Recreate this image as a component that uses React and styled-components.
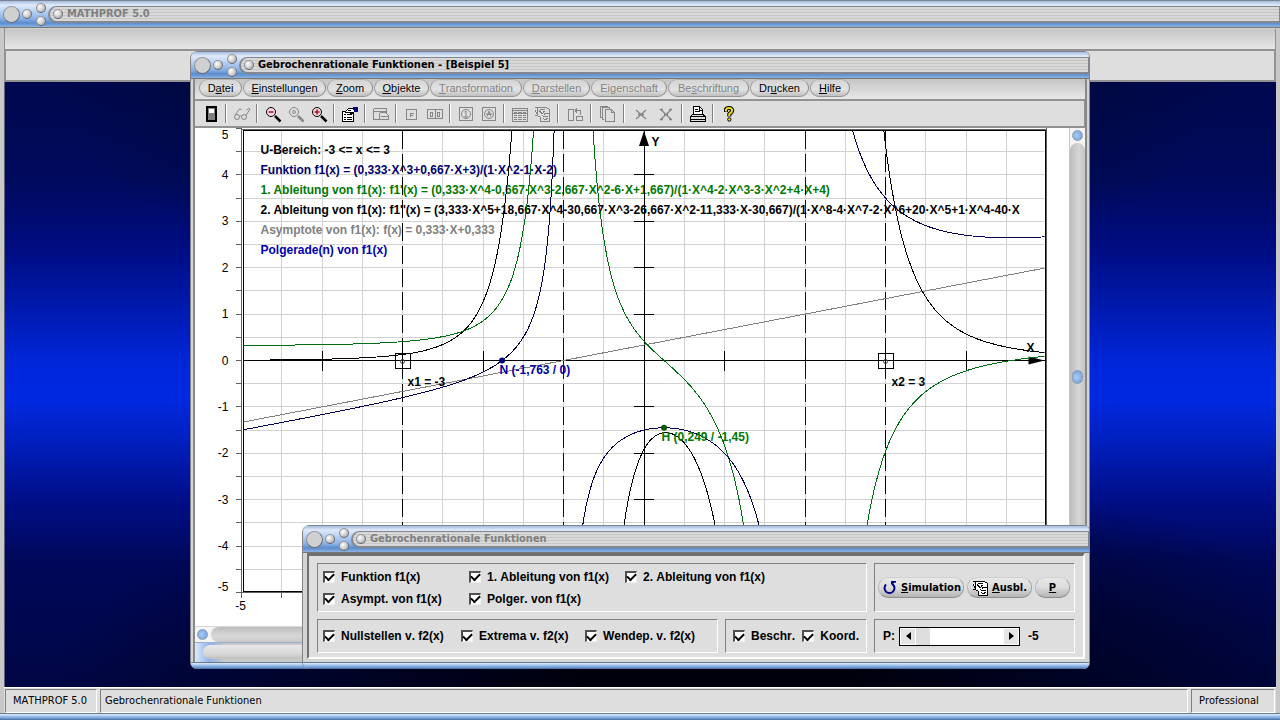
import React, { useState } from "react";
import styled, { createGlobalStyle, css } from "styled-components";

const GlobalStyle = createGlobalStyle`
  * {
    box-sizing: border-box;
  }

  body {
    margin: 0;
    background: #00000c;
    color: #000;
    font-family: "Liberation Sans", Arial, sans-serif;
    font-size: 11px;
    font-kerning: none;
  }

  button,
  input {
    font: inherit;
    color: inherit;
    margin: 0;
    padding: 0;
  }
`;

/* ---------- desktop frame ---------- */

const Desktop = styled.div`
  position: relative;
  display: flex;
  flex-direction: column;
  height: 100vh;
  min-height: 480px;
  overflow: hidden;
  background: #d0d0d0;
`;

const DesktopBody = styled.div`
  flex: 1;
  display: flex;
  flex-direction: column;
  min-height: 0;
  border: solid #c8c8c8;
  border-width: 0 4px;
  box-shadow: inset 1px 0 #808080;
`;

const EmptyMenu = styled.div`
  height: 21px;
  margin-top: 1px;
  border: 1px solid #909090;
  border-width: 0 1px 1px;
  background: linear-gradient(#c6c6c6, #e6e6e6);
`;

const EmptyToolbar = styled.div`
  height: 32px;
  border: 2px solid #929292;
  border-width: 1px 2px 2px;
  background: #dedede;
`;

const Wallpaper = styled.main`
  flex: 1;
  border-left: 1px solid #606078;
  background:
    radial-gradient(ellipse 52% 38% at 56% 100%, #00000c 20%, transparent),
    radial-gradient(ellipse 46% 38% at 50% 0, #000a24 20%, transparent),
    linear-gradient(
      #00084e 0,
      #000a5c 16%,
      #000c80 27%,
      #0018a8 36%,
      #0026d8 46%,
      #0029e2 52%,
      #0020c0 59%,
      #000e88 69%,
      #00085a 79%,
      #000644 100%
    );
`;

const StatusBar = styled.footer`
  display: flex;
  gap: 3px;
  height: 26px;
  padding: 1px 1px 0;
  border-top: 1px solid #fff;
  background: #dedede;
  font-family: "DejaVu Sans Condensed", "Liberation Sans", sans-serif;
`;

const StatusCell = styled.div`
  flex: ${(p) => (p.$grow ? "1" : "0 0 auto")};
  width: ${(p) => (p.$w ? `${p.$w}px` : "auto")};
  padding: 0 ${(p) => (p.$grow ? "4px" : "7px")};
  border: 1px solid;
  border-color: #808080 #fff #fff #808080;
  line-height: 22px;
  white-space: nowrap;
`;

const BottomEdge = styled.div`
  flex: none;
  height: 7px;
  border-top: 1px solid #70788a;
  border-bottom: 1px solid #5478a8;
  background: linear-gradient(#e0ecfc, #a8c8f0 40%, #5c8cc8);
`;

/* ---------- title bar ---------- */

const Bar = styled.header`
  flex: none;
  display: flex;
  align-items: center;
  height: 28px;
  border-top: 1px solid #7c8494;
  border-bottom: 1px solid #777;
  background: linear-gradient(
    #a4bcdc 0,
    #e0eafa 4px,
    #c0d6f4 9px,
    #88b0e6 18px,
    #5a8ccc 22px,
    #8cb2e2 26px
  );
`;

const Knob = styled.button`
  flex: none;
  width: ${(p) => (p.$big ? 17 : 10)}px;
  height: ${(p) => (p.$big ? 17 : 10)}px;
  border: 1px solid;
  border-color: #9c9ca0 #6c7078 #606468 #8c9094;
  border-radius: 50%;
  background: ${(p) =>
    p.$big
      ? "#d0d0d0"
      : "radial-gradient(circle at 35% 35%, #fff, #d4d4d4 45%, #989898)"};
`;

const Knobs = styled.div`
  display: flex;
  align-items: center;
  gap: 2px;
  padding-left: 3px;
`;

const KnobPair = styled.div`
  display: flex;
  flex-direction: column;
  gap: 3px;
  margin: 0 2px;
`;

const Groove = styled.div`
  flex: 1;
  display: flex;
  align-items: center;
  gap: 4px;
  height: 17px;
  padding-left: 3px;
  border: solid #84888e;
  border-width: 1px 1px 2px 2px;
  border-radius: 9px 0 0 9px;
  background: repeating-linear-gradient(#d8d8d8 0 2px, #c6c6c6 2px 3px);
`;

const TitleText = styled.h1`
  margin: 0;
  color: ${(p) => (p.$active ? "#000" : "#808080")};
  font: bold 11px/13px "DejaVu Sans Condensed", "Liberation Sans", sans-serif;
  white-space: nowrap;
`;

const TitleBar = ({ title, active }) => (
  <Bar>
    <Knobs>
      <Knob $big aria-label="Schließen" />
      <Knob aria-label="Minimieren" />
      <KnobPair>
        <Knob aria-label="Maximieren" />
        <Knob aria-label="Wiederherstellen" />
      </KnobPair>
    </Knobs>
    <Groove>
      <Knob aria-label="Systemmenü" />
      <TitleText $active={active}>{title}</TitleText>
    </Groove>
  </Bar>
);

/* ---------- windows ---------- */

const Window = styled.section`
  position: absolute;
  right: 190px;
  bottom: 51px;
  display: flex;
  flex-direction: column;
  overflow: hidden;
  border: solid #808488;
  border-width: 0 1px;
  border-radius: 8px 6px 7px 7px;
  background: #d4d4d4;
`;

const FunctionWindow = styled(Window)`
  top: 51px;
  left: 190px;
`;

const OptionsWindow = styled(Window)`
  left: 302px;
`;

const WindowBody = styled.div`
  flex: 1;
  display: flex;
  flex-direction: column;
  min-height: 0;
  margin: 0 2px;
  border: solid #888;
  border-width: 0 2px;
`;

const MenuBar = styled.nav`
  display: flex;
  gap: 1px;
  height: 20px;
  padding: 0 4px;
  background: linear-gradient(#c4c4c4, #e8e8e8);
`;

const MenuItem = styled.button`
  width: ${(p) => p.$w}px;
  height: 18px;
  border: 1px solid;
  border-color: #b0b0b0 #8c8c8c #949494 #9c9c9c;
  border-radius: 9px;
  background: linear-gradient(#d4d4d4, #e2e2e2 60%, #c0c0c0);
  line-height: 14px;
  white-space: nowrap;

  &:disabled {
    color: #848484;
  }
`;

const Toolbar = styled.div`
  display: flex;
  align-items: center;
  height: 29px;
  padding-left: 4px;
  border: 2px solid #929292;
  border-width: 2px 1px 2px 0;
  background: #dedede;
`;

const ToolButton = styled.button`
  display: grid;
  place-items: center;
  width: ${(p) => (p.$wide ? 25 : 23)}px;
  height: 22px;
  border: 0;
  background: none;
`;

const ToolSeparator = styled.span`
  width: 2px;
  height: 19px;
  margin: 0 3px;
  border-left: 1px solid #808080;
  border-right: 1px solid #fff;
`;

const PlotRow = styled.div`
  flex: 1;
  display: flex;
  min-height: 0;
  background: #fff;
`;

const PlotSvg = styled.svg`
  flex: 1;
  min-width: 0;
  height: 100%;
`;

const ScrollBar = styled.div`
  flex: none;
  display: flex;
  align-items: center;
  background: #f4f4f4;
  ${(p) =>
    p.$vertical
      ? css`
          flex-direction: column;
          width: 16px;
          padding: 2px 0;
          border-left: 1px solid #c8c8c8;
        `
      : css`
          height: 16px;
          padding: 0 2px;
          border-top: 1px solid #d8d8d8;
        `}
`;

const ScrollKnob = styled.button`
  width: 11px;
  height: ${(p) => (p.$tall ? 14 : 11)}px;
  border: 1px solid #8c9cb4;
  border-radius: 6px;
  background: radial-gradient(circle at 40% 50%, #a8ccf4, #6c9cd8);
`;

const ScrollTrack = styled.div`
  flex: 1;
  display: flex;
  align-items: center;
  justify-content: center;
  ${(p) =>
    p.$vertical
      ? css`
          width: 15px;
          margin: 2px 0;
          border-radius: 8px;
          background: linear-gradient(90deg, #bcbcbc, #d6d6d6 60%, #c4c4c4);
        `
      : css`
          height: 15px;
          margin: 0 3px;
          border-radius: 8px;
          background: linear-gradient(#bcbcbc, #d8d8d8 60%, #c8c8c8);
        `}
`;

const Strip = styled.div`
  height: 20px;
  padding: 2px 0 3px 8px;
  border-top: 1px solid #9ab0cc;
  background: linear-gradient(90deg, #dceafa, #8cb4e8 14px, #c8c8c8 30px);
`;

const StripGroove = styled.div`
  height: 14px;
  border-radius: 8px 0 0 8px;
  background: linear-gradient(#e8e8e8, #d8d8d8 60%, #c0c0c0);
`;

/* ---------- toolbar icons ---------- */

const Icon = styled.svg.attrs({
  width: 18,
  height: 18,
  viewBox: "0 0 18 18",
  fill: "none",
  "aria-hidden": true,
})`
  display: block;
  stroke: ${(p) => (p.$off ? "#868686" : "#000")};
  shape-rendering: ${(p) => (p.$smooth ? "auto" : "crispEdges")};
`;

const PanelIcon = () => (
  <Icon>
    <path d="M4 1h11v16H4z" fill="#000" stroke="none" />
    <path d="M6 3h7v12H6z" fill="#808080" stroke="none" />
    <path d="M7 4h5v4H7z" fill="#fff" stroke="none" />
  </Icon>
);

const GlassesIcon = () => (
  <Icon $off $smooth>
    <circle cx="4" cy="12" r="2.5" />
    <circle cx="11" cy="12" r="2.5" />
    <path d="M6.5 11.5q1-1.500 2 0M2 10l4.500-6 2 .5M13 10.500l4-6.500-1.500-.5-2 1.500" />
  </Icon>
);

const LensIcon = ({ sign, off }) => (
  <Icon $off={off} $smooth>
    <circle cx="7" cy="7" r="4.500" fill={off ? "none" : "#f4dede"} />
    <path d="M11 11l5.500 5.500" strokeWidth="2.500" />
    {sign === "dot" ? (
      <circle cx="7" cy="7" r="1.500" />
    ) : (
      <path
        d={sign === "plus" ? "M4.500 7h5M7 4.500v5" : "M4.500 7h5"}
        stroke="#c00030"
        strokeWidth="1.500"
      />
    )}
  </Icon>
);

const PropertiesIcon = () => (
  <Icon>
    <rect x="1.500" y="6.500" width="11" height="10" fill="#fff" />
    <path d="M3 9.500h2M6 9.500h5M3 12.500h2M6 12.500h5M3 14.500h2M6 14.500h5" />
    <path d="M4 7l4-4h3l2 1v3l-3 2-1-2-3 1z" fill="#fff" />
    <path d="M7 5h3M8 7h4" />
    <path d="M12 2h5v5h-4z" fill="#00007c" stroke="none" />
  </Icon>
);

const WindowIcon = () => (
  <Icon $off>
    <path d="M1.500 3.500h13v4M1.500 3.500v11h6M1.500 6.500h13M7.500 7.500v7M7.500 14.500h9v-4l-3-3h-6M9 11.500h7" />
  </Icon>
);

const SquareIcon = () => (
  <Icon $off>
    <rect x="3.500" y="4.500" width="10" height="10" />
    <path d="M7 8.500h4M7 10.500h3M7.500 8v4" />
  </Icon>
);

const PairIcon = () => (
  <Icon $off>
    <path d="M1.500 4.500h15v9h-15zM9.500 4v10M4.500 7h2v4h-2zM11.500 7h2v4h-2z" />
  </Icon>
);

const DialIcon = ({ kind }) => (
  <Icon $off $smooth>
    <rect x="2.500" y="2.500" width="13" height="13" />
    <circle cx="9" cy="9" r="4.500" />
    <path
      d={kind === "bar" ? "M7.500 7L9 6v6M7 12h4" : "M7 11.500L9 6l2 5.500M7 9.500h4M6 9h6"}
    />
  </Icon>
);

const TableIcon = () => (
  <Icon $off>
    <path d="M1.500 3.500h15v13h-15zM1 5h16M1 8.500h16" />
    <path
      d="M3 7.500h3M7 7.500h4M12 7.500h3M3 10.500h3M7 10.500h4M12 10.500h3M3 12.500h3M7 12.500h4M12 12.500h3M3 14.500h3M7 14.500h4M12 14.500h3"
    />
  </Icon>
);

const SheetIcon = ({ off }) => (
  <Icon $off={off}>
    <path d="M4.500 2.500h8l3 2v12h-9v-4l-3-2-2-5" fill={off ? "none" : "#fff"} />
    <path d="M1 2.500h4M3 2.500v7M1 10.500h3M5 5l3 4 3-3M6 4.500h5M10 8h5M8 10l2 2 4-1M9 13l2 2 3-2M9 6.500l2 3" />
  </Icon>
);

const FlipIcon = () => (
  <Icon $off>
    <path d="M2.500 4.500h5v11h-5zM10.500 11.500h6v4h-6zM9 5.500h5.500v4M9 5.500l2-2M9 5.500l2 2" />
  </Icon>
);

const StackIcon = () => (
  <Icon $off>
    <path d="M2.500 12.500h-1v-11h7v1M4.500 14.500h-1v-12h7v1M6.500 4.500h6l3 3v9h-9zM12.500 4.500v3h3" />
  </Icon>
);

const CrossIcon = ({ big }) => (
  <Icon $off $smooth>
    <path
      d={
        big
          ? "M3 4l12 11M15 4L3 15M3 4.500h3M12 4.500h3M7 9.500h4M3 14.500h3M12 14.500h3"
          : "M4 5l10 9M14 5L4 14M6 9.500h6"
      }
      strokeWidth="1.300"
    />
  </Icon>
);

const PrinterIcon = () => (
  <Icon>
    <path d="M4.500 9.500v-8h6l3 3v5" fill="#fff" />
    <path d="M10.500 2v3h3M6 4.500h3M6 6.500h5" />
    <path d="M1.500 11.500l2-2h11l2 2v5h-15z" fill="#dedede" />
    <path d="M1 11.500h16M1 14.500h16M1 16.500h16M14.500 10v1" />
  </Icon>
);

const HelpIcon = () => (
  <Icon $smooth>
    <path d="M6 7V4.500Q6.500 3 9 3t3.200 2Q12.300 7 9.300 9v2.500" strokeWidth="4" />
    <path d="M6 6.500V4.500Q6.500 3 9 3t3.200 2Q12.300 7 9.300 9v2" stroke="#f0e020" strokeWidth="2" />
    <circle cx="9.300" cy="14.500" r="1.700" fill="#f0e020" />
  </Icon>
);

const RotateIcon = () => (
  <Icon $smooth>
    <path d="M5 5.500a5 5 0 1 0 7 0" stroke="#000084" strokeWidth="2" />
    <path d="M10 2h5v1.500l-2.500.5V8L10 5z" fill="#000084" stroke="none" />
  </Icon>
);

const tools = [
  { icon: <PanelIcon />, label: "Ansicht" },
  "|",
  { icon: <GlassesIcon />, label: "Betrachten" },
  "|",
  { icon: <LensIcon sign="minus" />, label: "Verkleinern" },
  { icon: <LensIcon sign="dot" off />, label: "Originalgröße" },
  { icon: <LensIcon sign="plus" />, label: "Vergrößern" },
  "|",
  { icon: <PropertiesIcon />, label: "Einstellungen" },
  "|",
  { icon: <WindowIcon />, label: "Fenster" },
  "|",
  { icon: <SquareIcon />, label: "Punkt" },
  { icon: <PairIcon />, label: "Punktpaar" },
  "|",
  { icon: <DialIcon kind="bar" />, label: "Markierung" },
  { icon: <DialIcon kind="letter" />, label: "Beschriftung" },
  "|",
  { icon: <TableIcon />, label: "Tabelle" },
  { icon: <SheetIcon off />, label: "Ausblenden" },
  "|",
  { icon: <FlipIcon />, label: "Drehen", wide: true },
  "|",
  { icon: <StackIcon />, label: "Kopieren", wide: true },
  "|",
  { icon: <CrossIcon />, label: "Löschen", wide: true },
  { icon: <CrossIcon big />, label: "Alles löschen", wide: true },
  "|",
  { icon: <PrinterIcon />, label: "Drucken" },
  "|",
  { icon: <HelpIcon />, label: "Hilfe" },
];

/* text is split around the underlined access key */
const menus = [
  { text: ["D", "a", "tei"], w: 43 },
  { text: ["", "E", "instellungen"], w: 83 },
  { text: ["", "Z", "oom"], w: 46 },
  { text: ["", "O", "bjekte"], w: 55 },
  { text: ["", "T", "ransformation"], w: 92, off: true },
  { text: ["", "D", "arstellen"], w: 67, off: true },
  { text: ["Ei", "g", "enschaft"], w: 76, off: true },
  { text: ["Be", "s", "chriftung"], w: 81, off: true },
  { text: ["Dr", "u", "cken"], w: 59 },
  { text: ["", "H", "ilfe"], w: 40 },
];

/* ---------- plot ---------- */

const VIEW_W = 873;
const VIEW_H = 498;
const X0 = 448.5;
const Y0 = 232.5;
const UNIT_X = 80.5;
const UNIT_Y = 46.4;
const FRAME = { left: 48, top: 3, right: 849, bottom: 463 };

const toX = (x) => X0 + x * UNIT_X;
const toY = (y) => Y0 - y * UNIT_Y;

const f = (x) => (x ** 3 / 3 + (2 * x) / 3 + 3) / (x * x - x - 2);
const d1 = (x, h = 1e-4) => (f(x + h) - f(x - h)) / (2 * h);
const d2 = (x, h = 1e-3) => (f(x + h) - 2 * f(x) + f(x - h)) / (h * h);

const branches = [
  [-5, -1.02],
  [-0.98, 1.98],
  [2.02, 5],
];

const curvePath = (fn) =>
  branches
    .map(([from, to]) => {
      const points = [];
      for (let x = from; x <= to; x += 0.02) {
        const y = Math.max(-12, Math.min(12, fn(x)));
        points.push(`${toX(x).toFixed(1)} ${toY(y).toFixed(1)}`);
      }
      return `M${points.join("L")}`;
    })
    .join("");

const curves = [
  { fn: d2, color: "#000" },
  { fn: d1, color: "#006c10" },
  { fn: f, color: "#00004c" },
];

const asymptote = (x) => x / 3 + 1 / 3;

const legend = [
  { text: "U-Bereich: -3 <= x <= 3", color: "#000" },
  {
    text: "Funktion f1(x) = (0,333·X^3+0,667·X+3)/(1·X^2-1·X-2)",
    color: "#000070",
  },
  {
    text: "1. Ableitung von f1(x): f1'(x) = (0,333·X^4-0,667·X^3-2,667·X^2-6·X+1,667)/(1·X^4-2·X^3-3·X^2+4·X+4)",
    color: "#007800",
  },
  {
    text: "2. Ableitung von f1(x): f1''(x) = (3,333·X^5+18,667·X^4-30,667·X^3-26,667·X^2-11,333·X-30,667)/(1·X^8-4·X^7-2·X^6+20·X^5+1·X^4-40·X",
    color: "#000",
  },
  { text: "Asymptote von f1(x): f(x) = 0,333·X+0,333", color: "#808080" },
  { text: "Polgerade(n) von f1(x)", color: "#0000b0" },
];

const PlotText = styled.text`
  font: ${(p) => (p.$plain ? "normal" : "bold")} 12px "Liberation Sans", Arial,
    sans-serif;
  fill: ${(p) => p.$color || "#000"};
`;

const Thin = styled.g`
  fill: none;
  stroke-width: 1;
  shape-rendering: crispEdges;
`;

const halfSteps = Array.from({ length: 21 }, (_, i) => i / 2 - 5);
const integers = halfSteps.filter((v) => Number.isInteger(v));

const Plot = () => (
  <PlotSvg
    viewBox={`0 0 ${VIEW_W} ${VIEW_H}`}
    role="img"
    aria-label="Graphen der Funktion und ihrer Ableitungen"
  >
    <clipPath id="frame">
      <rect
        x={FRAME.left}
        y={FRAME.top}
        width={FRAME.right - FRAME.left}
        height={FRAME.bottom - FRAME.top}
      />
    </clipPath>

    <Thin stroke="#d2d2d2" clipPath="url(#frame)">
      {halfSteps.map((v) => (
        <path
          key={v}
          d={`M${toX(v)} ${FRAME.top}V${FRAME.bottom}M${FRAME.left} ${toY(v)}H${FRAME.right}`}
        />
      ))}
    </Thin>

    {/* scale along the left and lower edge */}
    <Thin stroke="#606060">
      <path d={`M45.500 0V${toY(-5)}H850.500V0M45.500 1.500H850`} />
      {halfSteps.map((v) => (
        <path key={v} d={`M40 ${toY(v)}h6M${toX(v)} ${toY(-5)}v5`} />
      ))}
    </Thin>
    {integers.map((v) => (
      <PlotText
        key={v}
        $plain
        x="33"
        y={v === 5 ? 11 : v === -5 ? 463 : Math.round(toY(v)) + 4}
        textAnchor="end"
      >
        {v}
      </PlotText>
    ))}
    <PlotText $plain x="45" y="482" textAnchor="middle">
      -5
    </PlotText>

    <g clipPath="url(#frame)">
      {legend.map((line, i) => (
        <PlotText key={line.text} $color={line.color} x="65" y={26 + i * 20}>
          {line.text}
        </PlotText>
      ))}
    </g>

    <Thin stroke="#000">
      <rect
        x={FRAME.left - 0.5}
        y={FRAME.top - 0.5}
        width={FRAME.right - FRAME.left + 1}
        height={FRAME.bottom - FRAME.top + 1}
      />
      <path d={`M${FRAME.left} ${Y0}H${FRAME.right}M${X0} ${FRAME.top}V${FRAME.bottom}`} />
      {integers.slice(1, -1).map((v) => (
        <path key={v} d={`M${toX(v)} ${Y0 - 10}v20M${X0 - 10} ${toY(v)}h20`} />
      ))}
    </Thin>
    <path d={`M${X0} 3l5 15h-10zM849 ${Y0}l-16-4v8z`} />

    <Thin strokeDasharray="18 5">
      <path
        stroke="#000"
        d={`M${toX(-3)} ${FRAME.top}V${FRAME.bottom}M${toX(3)} ${FRAME.top}V${FRAME.bottom}`}
      />
      <path
        stroke="#000084"
        d={`M${toX(-1)} ${FRAME.top}V${FRAME.bottom}M${toX(2)} ${FRAME.top}V${FRAME.bottom}`}
      />
    </Thin>

    <Thin clipPath="url(#frame)">
      <path
        stroke="#808080"
        d={`M${toX(-5)} ${toY(asymptote(-5))}L${toX(5)} ${toY(asymptote(5))}`}
      />
      {curves.map((c) => (
        <path key={c.color} d={curvePath(c.fn)} stroke={c.color} />
      ))}
    </Thin>

    {[-3, 3].map((x) => (
      <g key={x} fill="none" stroke="#000">
        <rect
          x={Math.floor(toX(x)) - 7.5}
          y={Y0 - 7}
          width="15"
          height="15"
          shapeRendering="crispEdges"
        />
        <circle cx={toX(x)} cy={Y0 + 1} r="2" stroke="#404040" />
      </g>
    ))}
    <circle cx={toX(-1.763)} cy={Y0} r="3" fill="#00007c" />
    <circle cx={toX(0.249)} cy={toY(-1.45)} r="3" fill="#005800" />

    <PlotText x="212" y="258">x1 = -3</PlotText>
    <PlotText x="696" y="258">x2 = 3</PlotText>
    <PlotText $color="#0000a8" x="304" y="246">N (-1,763 / 0)</PlotText>
    <PlotText $color="#007800" x="466" y="313">H (0,249 / -1,45)</PlotText>
    <PlotText x="456" y="18">Y</PlotText>
    <PlotText x="831" y="224">X</PlotText>
  </PlotSvg>
);

/* ---------- options window ---------- */

const OptionsBody = styled.form`
  display: grid;
  gap: 7px;
  margin: 0 4px 3px;
  padding: 7px 8px 4px;
  border: solid;
  border-width: 3px 2px 2px;
  border-color: #707070 #fff #fff #707070;
  background: #dedede;
`;

const OptionsRow = styled.div`
  display: grid;
  grid-template-columns: ${(p) => p.$columns};
  gap: 7px;
`;

const Group = styled.div`
  display: ${(p) => (p.$grid ? "grid" : "flex")};
  grid-template-columns: ${(p) => p.$grid};
  grid-auto-rows: 22px;
  align-content: center;
  align-items: center;
  gap: ${(p) => p.$gap || 0}px;
  min-height: ${(p) => (p.$tall ? 49 : 34)}px;
  padding: 0 ${(p) => p.$pad || 5}px;
  border: 1px solid;
  border-color: #808080 #fff #fff #808080;
`;

const CheckLabel = styled.label`
  display: inline-flex;
  align-items: center;
  gap: 6px;
  width: ${(p) => (p.$w ? `${p.$w}px` : "auto")};
  font-size: 12px;
  font-weight: bold;
  line-height: 14px;
  white-space: nowrap;
`;

const CheckBox = styled.input.attrs({ type: "checkbox" })`
  appearance: none;
  display: grid;
  place-items: center;
  width: 12px;
  height: 12px;
  border: solid;
  border-width: 2px 1px 1px 2px;
  border-color: #505050 #f0f0f0 #f0f0f0 #505050;
  background: #fff;

  &:checked::after {
    content: "";
    width: 7px;
    height: 4px;
    border: solid #000;
    border-width: 0 0 2px 2px;
    transform: translateY(-1px) rotate(-45deg);
  }
`;

const Check = ({ label, width }) => (
  <CheckLabel $w={width}>
    <CheckBox defaultChecked />
    {label}
  </CheckLabel>
);

const PillButton = styled.button`
  display: flex;
  align-items: center;
  justify-content: center;
  gap: 2px;
  width: ${(p) => p.$w}px;
  height: 21px;
  border: 1px solid;
  border-color: #d0d0d0 #a0a0a0 #8c8c8c #b8b8b8;
  border-radius: 10px;
  background: linear-gradient(#e8e8e8, #dcdcdc 50%, #b4b4b4);
  font: bold 11px/16px "DejaVu Sans Condensed", "Liberation Sans", sans-serif;
`;

const ParamLabel = styled.label`
  width: 16px;
  font-size: 12px;
  font-weight: bold;
`;

const Spinner = styled.div`
  display: flex;
  width: 121px;
  height: 19px;
  border: 1px solid #000;
  background: #fff;
`;

const Arrow = styled.button`
  display: grid;
  place-items: center;
  width: 16px;
  border: 1px solid #fff;
  background: #e4e4e4;
`;

const Range = styled.input.attrs({ type: "range" })`
  appearance: none;
  flex: 1;
  min-width: 0;
  background: #fff;

  &::-webkit-slider-thumb {
    appearance: none;
    width: 14px;
    height: 17px;
    background: #dedede;
  }
`;

const Output = styled.output`
  margin-left: 8px;
  font-size: 12px;
  font-weight: bold;
`;

const Options = () => {
  const [p, setP] = useState(-5);
  const step = (by) => setP((v) => Math.max(-5, Math.min(5, v + by)));

  return (
    <OptionsBody onSubmit={(e) => e.preventDefault()}>
      <OptionsRow $columns="minmax(0, 1fr) 201px">
        <Group $tall $grid="146px 156px 1fr">
          <Check label="Funktion f1(x)" />
          <Check label="1. Ableitung von f1(x)" />
          <Check label="2. Ableitung von f1(x)" />
          <Check label="Asympt. von f1(x)" />
          <Check label="Polger. von f1(x)" />
        </Group>
        <Group $tall $gap={3} $pad={3}>
          <PillButton type="button" $w={86}>
            <RotateIcon />
            <span>
              <u>S</u>imulation
            </span>
          </PillButton>
          <PillButton type="button" $w={65}>
            <SheetIcon />
            <span>
              <u>A</u>usbl.
            </span>
          </PillButton>
          <PillButton type="button" $w={35}>
            <u>P</u>
          </PillButton>
        </Group>
      </OptionsRow>
      <OptionsRow $columns="minmax(0, 1fr) 142px 201px">
        <Group>
          <Check label="Nullstellen v. f2(x)" width={138} />
          <Check label="Extrema v. f2(x)" width={124} />
          <Check label="Wendep. v. f2(x)" />
        </Group>
        <Group $pad={7}>
          <Check label="Beschr." width={72} />
          <Check label="Koord." />
        </Group>
        <Group $pad={8}>
          <ParamLabel htmlFor="param">P:</ParamLabel>
          <Spinner>
            <Arrow type="button" aria-label="Verringern" onClick={() => step(-1)}>
              <svg width="5" height="8" viewBox="0 0 5 8">
                <path d="M5 0v8L0 4z" />
              </svg>
            </Arrow>
            <Range
              id="param"
              min="-5"
              max="5"
              value={p}
              onChange={(e) => setP(Number(e.target.value))}
            />
            <Arrow type="button" aria-label="Erhöhen" onClick={() => step(1)}>
              <svg width="5" height="8" viewBox="0 0 5 8">
                <path d="M0 0v8l5-4z" />
              </svg>
            </Arrow>
          </Spinner>
          <Output htmlFor="param">{p}</Output>
        </Group>
      </OptionsRow>
    </OptionsBody>
  );
};

const App = () => {
  return (
    <>
      <GlobalStyle />
      <Desktop>
        <TitleBar title="MATHPROF 5.0" />
        <DesktopBody>
          <EmptyMenu />
          <EmptyToolbar />
          <Wallpaper />
          <StatusBar>
            <StatusCell $w={92}>MATHPROF 5.0</StatusCell>
            <StatusCell $grow>Gebrochenrationale Funktionen</StatusCell>
            <StatusCell $w={84}>Professional</StatusCell>
          </StatusBar>
        </DesktopBody>
        <BottomEdge />

        <FunctionWindow>
          <TitleBar active title="Gebrochenrationale Funktionen - [Beispiel 5]" />
          <WindowBody>
            <MenuBar>
              {menus.map(({ text: [before, key, after], w, off }) => (
                <MenuItem key={before + key + after} $w={w} disabled={off}>
                  {before}
                  <u>{key}</u>
                  {after}
                </MenuItem>
              ))}
            </MenuBar>
            <Toolbar>
              {tools.map((tool, i) =>
                tool === "|" ? (
                  <ToolSeparator key={i} />
                ) : (
                  <ToolButton key={i} $wide={tool.wide} aria-label={tool.label}>
                    {tool.icon}
                  </ToolButton>
                )
              )}
            </Toolbar>
            <PlotRow>
              <Plot />
              <ScrollBar $vertical>
                <ScrollKnob aria-label="Nach oben" />
                <ScrollTrack $vertical>
                  <ScrollKnob $tall aria-label="Vertikal verschieben" />
                </ScrollTrack>
                <ScrollKnob aria-label="Nach unten" />
              </ScrollBar>
            </PlotRow>
            <ScrollBar>
              <ScrollKnob aria-label="Nach links" />
              <ScrollTrack />
              <ScrollKnob aria-label="Nach rechts" />
            </ScrollBar>
            <Strip>
              <StripGroove />
            </Strip>
          </WindowBody>
          <BottomEdge />
        </FunctionWindow>

        <OptionsWindow>
          <TitleBar title="Gebrochenrationale Funktionen" />
          <Options />
          <BottomEdge />
        </OptionsWindow>
      </Desktop>
    </>
  );
};

export default App;
